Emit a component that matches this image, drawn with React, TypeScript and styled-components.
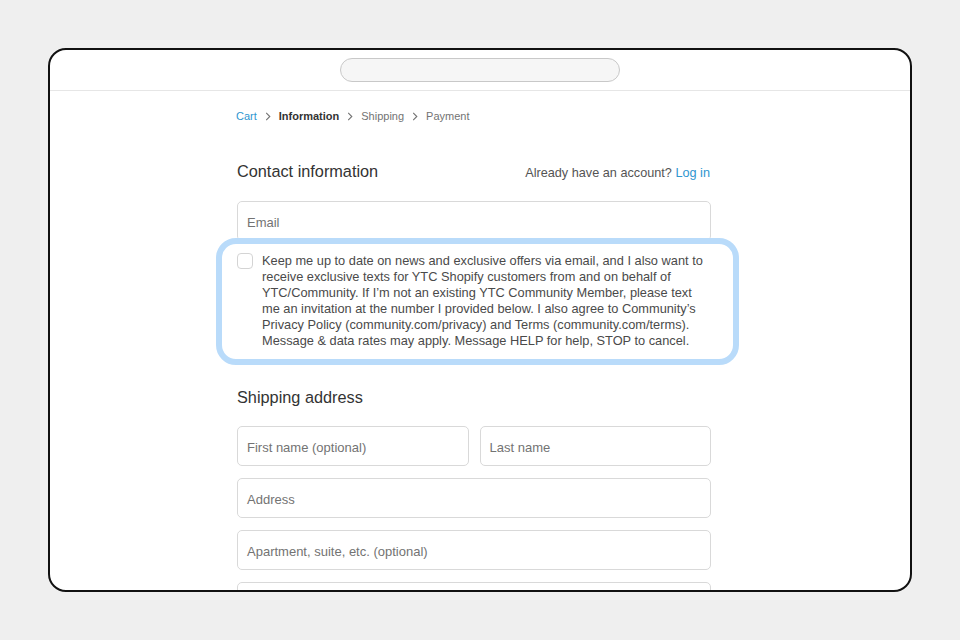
import styled, { createGlobalStyle } from 'styled-components';

const GlobalStyle = createGlobalStyle`
  html, body {
    margin: 0;
    padding: 0;
    background: #efefef;
    font-family: "Liberation Sans", Arial, sans-serif;
  }
`;

function Chevron() {
  return (
    <ChevronIcon viewBox="0 0 6 10" aria-hidden>
      <path d="M1 1l4 4-4 4" fill="none" stroke="#737373" strokeWidth="1.2" />
    </ChevronIcon>
  );
}

const consentLines = [
  'Keep me up to date on news and exclusive offers via email, and I also want to',
  'receive exclusive texts for YTC Shopify customers from and on behalf of',
  'YTC/Community. If I’m not an existing YTC Community Member, please text',
  'me an invitation at the number I provided below. I also agree to Community’s',
  'Privacy Policy (community.com/privacy) and Terms (community.com/terms).',
  'Message & data rates may apply. Message HELP for help, STOP to cancel.',
];

export default function App() {
  return (
    <>
      <GlobalStyle />
      <Page>
        <Frame>
          <TopBar>
            <UrlBar />
          </TopBar>
          <Content>
            <Breadcrumb>
              <Crumb $state="link">Cart</Crumb>
              <Chevron />
              <Crumb $state="current">Information</Crumb>
              <Chevron />
              <Crumb>Shipping</Crumb>
              <Chevron />
              <Crumb>Payment</Crumb>
            </Breadcrumb>

            <SectionHead>
              <Heading>Contact information</Heading>
              <Account>
                Already have an account? <Link>Log in</Link>
              </Account>
            </SectionHead>

            <Field>Email</Field>

            <Consent>
              <Checkbox />
              <ConsentText>
                {consentLines.map((line) => (
                  <div key={line}>{line}</div>
                ))}
              </ConsentText>
            </Consent>

            <Heading $top={22}>Shipping address</Heading>

            <Fields>
              <Row>
                <Field>First name (optional)</Field>
                <Field>Last name</Field>
              </Row>
              <Field>Address</Field>
              <Field>Apartment, suite, etc. (optional)</Field>
              <Field />
            </Fields>
          </Content>
        </Frame>
      </Page>
    </>
  );
}

const Page = styled.div`
  width: 960px;
  height: 640px;
  padding: 48px;
  box-sizing: border-box;
`;

const Frame = styled.div`
  width: 864px;
  height: 544px;
  box-sizing: border-box;
  border: 2px solid #111;
  border-radius: 18px;
  background: #fff;
  overflow: hidden;
`;

const TopBar = styled.div`
  height: 41px;
  border-bottom: 1px solid #e6e6e6;
  display: flex;
  justify-content: center;
  padding-top: 8px;
  box-sizing: border-box;
`;

const UrlBar = styled.div`
  width: 280px;
  height: 24px;
  box-sizing: border-box;
  border: 1px solid #c8c8c8;
  border-radius: 12px;
  background: #f6f6f6;
`;

const Content = styled.div`
  width: 474px;
  margin-left: 187px;
  padding-top: 17px;
  display: flex;
  flex-direction: column;
`;

const Breadcrumb = styled.nav`
  display: flex;
  align-items: center;
  height: 16px;
  gap: 8px;
  font-size: 11px;
  margin-left: -1px;
`;

const ChevronIcon = styled.svg`
  width: 6px;
  height: 9px;
`;

const Crumb = styled.span<{ $state?: 'link' | 'current' }>`
  color: ${(p) => (p.$state === 'link' ? '#2f96d0' : p.$state === 'current' ? '#333' : '#737373')};
  font-weight: ${(p) => (p.$state === 'current' ? 700 : 400)};
`;

const SectionHead = styled.div`
  display: flex;
  justify-content: space-between;
  align-items: baseline;
  margin-top: 37px;
`;

const Heading = styled.h2<{ $top?: number }>`
  margin: ${(p) => p.$top ?? 0}px 0 0;
  font-size: 16.3px;
  line-height: 20px;
  font-weight: 400;
  color: #333;
`;

const Account = styled.div`
  font-size: 12.7px;
  color: #545454;
  margin-right: 1px;
`;

const Link = styled.a`
  color: #2f96d0;
  cursor: pointer;
`;

const Fields = styled.div`
  display: flex;
  flex-direction: column;
  gap: 12px;
  margin-top: 19px;
`;

const Row = styled.div`
  display: grid;
  grid-template-columns: 1fr 1fr;
  gap: 11px;
`;

const Field = styled.div`
  height: 40px;
  box-sizing: border-box;
  border: 1px solid #d9d9d9;
  border-radius: 5px;
  padding: 2px 9px 0;
  display: flex;
  align-items: center;
  font-size: 13px;
  color: #737373;
  background: #fff;

  ${SectionHead} + & {
    margin-top: 20px;
  }
`;

const Consent = styled.div`
  position: relative;
  margin: -3px -28px 0 -21px;
  border: 6px solid #b9dbfa;
  border-radius: 20px;
  padding: 9px 10px 10px 15px;
  display: flex;
  gap: 9px;
  background: #fff;
`;

const Checkbox = styled.div`
  flex: none;
  width: 16px;
  height: 16px;
  box-sizing: border-box;
  border: 1px solid #d4d4d4;
  border-radius: 4px;
  background: #fff;
`;

const ConsentText = styled.div`
  font-size: 12.8px;
  line-height: 16px;
  color: #4a4a4a;
  white-space: nowrap;
`;
